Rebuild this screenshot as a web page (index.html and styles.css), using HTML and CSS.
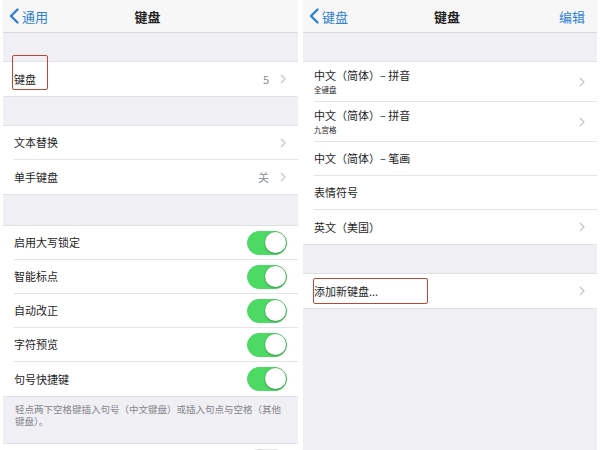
FILE: index.html
```html
<!DOCTYPE html>
<html lang="zh-CN">

<head>
  <meta charset="UTF-8">
  <meta name="viewport" content="width=device-width">
  <title>键盘</title>
  <link rel="stylesheet" href="styles.css">
</head>

<body>

  <div class="screen screen-left">
    <div class="nav">
      <a class="back">
        <svg width="10" height="16" viewBox="0 0 10 16"><polyline points="8.5,1.5 2,8 8.5,14.5" fill="none" stroke="#2f7fd4" stroke-width="2.4" stroke-linecap="round" stroke-linejoin="round"/></svg>
        通用
      </a>
      <span class="title">键盘</span>
      <span></span>
    </div>

    <div class="spacer"></div>
    <div class="group">
      <div class="row">
        <span class="label">键盘</span>
        <span class="value">5</span>
        <svg class="chev" width="6" height="10" viewBox="0 0 6 10"><polyline points="1,1 5,5 1,9" fill="none" stroke="#c4c4c9" stroke-width="1.2"/></svg>
        <span class="mark mark-keyboards"></span>
      </div>
    </div>

    <div class="spacer"></div>
    <div class="group">
      <div class="row">
        <span class="label">文本替换</span>
        <svg class="chev" width="6" height="10" viewBox="0 0 6 10"><polyline points="1,1 5,5 1,9" fill="none" stroke="#c4c4c9" stroke-width="1.2"/></svg>
      </div>
      <div class="row">
        <span class="label">单手键盘</span>
        <span class="value">关</span>
        <svg class="chev" width="6" height="10" viewBox="0 0 6 10"><polyline points="1,1 5,5 1,9" fill="none" stroke="#c4c4c9" stroke-width="1.2"/></svg>
      </div>
    </div>

    <div class="spacer spacer-wide"></div>
    <div class="group">
      <div class="row"><span class="label">启用大写锁定</span><span class="toggle on"></span></div>
      <div class="row"><span class="label">智能标点</span><span class="toggle on"></span></div>
      <div class="row"><span class="label">自动改正</span><span class="toggle on"></span></div>
      <div class="row"><span class="label">字符预览</span><span class="toggle on"></span></div>
      <div class="row"><span class="label">句号快捷键</span><span class="toggle on"></span></div>
    </div>
    <p class="footer">轻点两下空格键插入句号（中文键盘）或插入句点与空格（其他键盘）。</p>

    <div class="group">
      <div class="row"><span class="label">启用听写</span><span class="toggle"></span></div>
    </div>
  </div>

  <div class="screen screen-right">
    <div class="nav">
      <a class="back">
        <svg width="10" height="16" viewBox="0 0 10 16"><polyline points="8.5,1.5 2,8 8.5,14.5" fill="none" stroke="#2f7fd4" stroke-width="2.4" stroke-linecap="round" stroke-linejoin="round"/></svg>
        键盘
      </a>
      <span class="title">键盘</span>
      <a class="edit">编辑</a>
    </div>

    <div class="spacer"></div>
    <div class="group">
      <div class="row tall">
        <span class="label">中文（简体）– 拼音<small>全键盘</small></span>
        <svg class="chev" width="6" height="10" viewBox="0 0 6 10"><polyline points="1,1 5,5 1,9" fill="none" stroke="#c4c4c9" stroke-width="1.2"/></svg>
      </div>
      <div class="row tall">
        <span class="label">中文（简体）– 拼音<small>九宫格</small></span>
        <svg class="chev" width="6" height="10" viewBox="0 0 6 10"><polyline points="1,1 5,5 1,9" fill="none" stroke="#c4c4c9" stroke-width="1.2"/></svg>
      </div>
      <div class="row"><span class="label">中文（简体）– 笔画</span></div>
      <div class="row"><span class="label">表情符号</span></div>
      <div class="row">
        <span class="label">英文（美国）</span>
        <svg class="chev" width="6" height="10" viewBox="0 0 6 10"><polyline points="1,1 5,5 1,9" fill="none" stroke="#c4c4c9" stroke-width="1.2"/></svg>
      </div>
    </div>

    <div class="spacer"></div>
    <div class="group">
      <div class="row">
        <span class="label">添加新键盘...</span>
        <svg class="chev" width="6" height="10" viewBox="0 0 6 10"><polyline points="1,1 5,5 1,9" fill="none" stroke="#c4c4c9" stroke-width="1.2"/></svg>
        <span class="mark mark-add"></span>
      </div>
    </div>
  </div>

</body>

</html>
```

FILE: styles.css
```css
* {
  box-sizing: border-box;
  margin: 0;
  padding: 0;
}

body {
  font-family: "Noto Sans CJK SC", "Noto Sans", sans-serif;
  display: flex;
  gap: 5px;
  height: 450px;
  overflow: hidden;
  padding-left: 3px;
  background-color: #ffffff;
  color: #222;
}

.screen {
  height: 450px;
  overflow: hidden;
  background-color: #efeff4;
}

.screen-left {
  width: 295px;
}

.screen-right {
  width: 294px;
}

.nav {
  display: grid;
  grid-template-columns: 1fr auto 1fr;
  align-items: center;
  height: 33px;
  padding: 0 12px 0 6px;
  background-color: #f7f7f8;
  border-bottom: 1px solid #d9d9dd;
}

.back,
.edit {
  color: #2f7fd4;
  font-size: 13px;
  display: flex;
  align-items: center;
  gap: 3px;
}

.edit {
  justify-content: flex-end;
}

.title {
  font-size: 13px;
  font-weight: bold;
}

.spacer {
  height: 28px;
}

.spacer-wide {
  height: 30px;
}

.group {
  background-color: #ffffff;
  border-top: 1px solid #e2e2e6;
  border-bottom: 1px solid #e2e2e6;
  padding-left: 11px;
}

.row {
  position: relative;
  display: flex;
  align-items: center;
  height: 34px;
  padding-right: 12px;
  border-bottom: 1px solid #e4e4e8;
}

.row:last-child {
  border-bottom: none;
}

.row.tall {
  height: 40px;
}

.label {
  flex: 1;
  font-size: 11px;
  display: flex;
  flex-direction: column;
  line-height: 15px;
  color: #1e1e1e;
}

.label small {
  font-size: 7.5px;
  line-height: 10px;
  margin-top: 2px;
}

.value {
  font-size: 11px;
  color: #8e8e93;
  margin-right: 11px;
}

.chev {
  display: block;
}

.toggle {
  position: relative;
  width: 40px;
  height: 24px;
  border-radius: 12px;
  background-color: #ffffff;
  border: 1.5px solid #e3e3e6;
  margin-right: -1px;
}

.toggle::after {
  content: "";
  position: absolute;
  top: 0;
  left: 0;
  width: 21px;
  height: 21px;
  border-radius: 50%;
  background-color: #ffffff;
  box-shadow: 0 1px 3px rgba(0, 0, 0, 0.3);
}

.toggle.on {
  background-color: #4cd964;
  border-color: #4cd964;
}

.toggle.on::after {
  left: auto;
  right: 0;
  box-shadow: 0 0 0 0.5px rgba(0, 0, 0, 0.12), 0 1px 2px rgba(0, 0, 0, 0.25);
}

.footer {
  font-size: 9.5px;
  line-height: 12px;
  color: #86868b;
  padding: 6px 12px 0 12px;
  height: 46px;
}

.mark {
  position: absolute;
  border: 1.5px solid #b9473a;
  border-radius: 2px;
}

.mark-keyboards {
  left: -2px;
  top: -7px;
  width: 36px;
  height: 35px;
}

.mark-add {
  left: -1px;
  top: 4px;
  width: 115px;
  height: 26px;
}
```
